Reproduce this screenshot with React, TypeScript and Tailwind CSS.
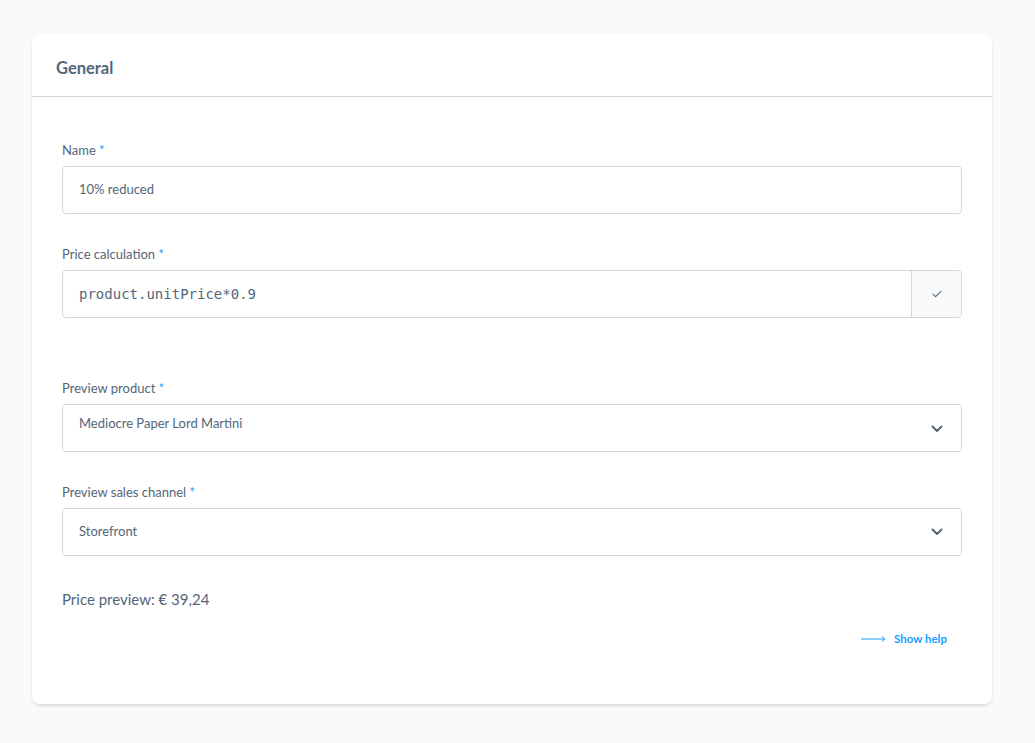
import React from "react";

const labelCls = "block h-[16px] leading-[16px] text-[13px] text-[#52667a] mb-[8px]";

function Label({ children }: { children: React.ReactNode }) {
  return (
    <label className={labelCls}>
      {children} <span className="text-[#189eff]">*</span>
    </label>
  );
}

function Chevron() {
  return (
    <svg width="12" height="8" viewBox="0 0 12 8" fill="none">
      <path d="M1.5 1.5 L6 6 L10.5 1.5" stroke="#52667a" strokeWidth="2" strokeLinecap="round" strokeLinejoin="round" />
    </svg>
  );
}

export default function App() {
  return (
    <div
      className="min-h-[743px] w-full bg-[#f9fafb] pt-[34px] pl-[32px]"
      style={{ fontFamily: "Lato, 'Noto Sans', sans-serif" }}
    >
      <div className="w-[960px] bg-white rounded-[8px] shadow-[0_2px_3px_0_rgba(0,0,0,0.12)]">
        <div className="h-[63px] border-b border-[#d1d9e0] flex items-center px-[24px] pt-[6px]">
          <h2 className="text-[16.5px] font-bold text-[#52667a]">General</h2>
        </div>
        <div className="px-[30px] pt-[45px] pb-[57px]">
          <Label>Name</Label>
          <div className="h-[48px] border border-[#d1d9e0] rounded-[4px] flex items-center px-[16px] text-[13px] text-[#52667a]">
            10% reduced
          </div>

          <div className="mt-[32px]">
            <Label>Price calculation</Label>
            <div className="h-[48px] border border-[#d1d9e0] rounded-[4px] flex">
              <div
                className="flex-1 flex items-center px-[16px] text-[14px] text-[#52667a]"
                style={{ fontFamily: "'DejaVu Sans Mono', monospace" }}
              >
                product.unitPrice*0.9
              </div>
              <div className="w-[50px] border-l border-[#d1d9e0] bg-[#f9fafb] rounded-r-[4px] flex items-center justify-center">
                <svg width="10" height="8" viewBox="0 0 10 8" fill="none">
                  <path d="M1 4.2 L3.6 6.6 L9 1.4" stroke="#52667a" strokeWidth="1.1" strokeLinecap="round" strokeLinejoin="round" />
                </svg>
              </div>
            </div>
          </div>

          <div className="mt-[62px]">
            <Label>Preview product</Label>
            <div className="h-[48px] border border-[#d1d9e0] rounded-[4px] flex items-start pt-[9px] pl-[16px] pr-[18px] text-[13px] text-[#52667a] relative">
              <span>Mediocre Paper Lord Martini</span>
              <span className="absolute right-[18px] top-[20px]">
                <Chevron />
              </span>
            </div>
          </div>

          <div className="mt-[32px]">
            <Label>Preview sales channel</Label>
            <div className="h-[48px] border border-[#d1d9e0] rounded-[4px] flex items-center justify-between pl-[16px] pr-[18px] text-[13px] text-[#52667a]">
              <span>Storefront</span>
              <Chevron />
            </div>
          </div>

          <div className="mt-[33px] text-[15px] leading-[20px] text-[#52667a]">Price preview: € 39,24</div>

          <div className="mt-[21px] flex justify-end pr-[15px]">
            <a className="flex items-center gap-[7px] text-[11.5px] font-bold text-[#189eff]">
              <svg width="26" height="8" viewBox="0 0 26 8" fill="none">
                <path d="M0 4 H24 M21 1.5 L24 4 L21 6.5" stroke="#189eff" strokeWidth="1" />
              </svg>
              Show help
            </a>
          </div>
        </div>
      </div>
    </div>
  );
}
